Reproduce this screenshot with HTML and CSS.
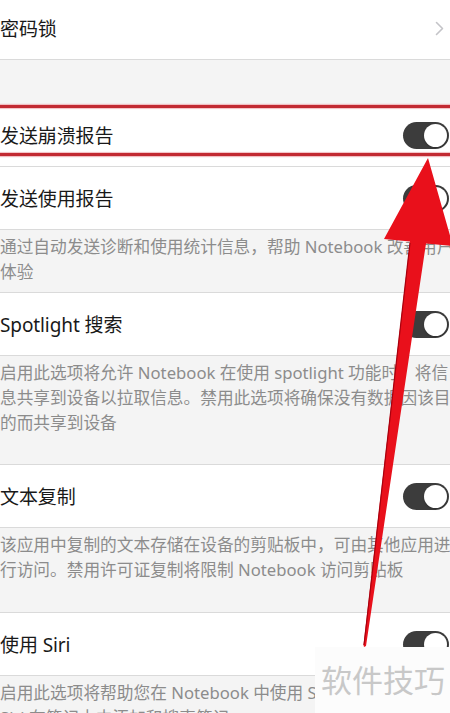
FILE: index.html
```html
<!DOCTYPE html>
<html lang="zh-CN">
<head>
  <meta charset="UTF-8" />
  <meta name="viewport" content="width=device-width, initial-scale=1.0"/>
  <title>设置 - Notebook</title>
  <link rel="stylesheet" href="styles.css">
</head>
<body>

  <!-- Settings list -->
  <div class="screen">
    <div class="cell cell-first">
      <span class="label">密码锁</span>
      <svg class="chevron" width="9" height="15" viewBox="0 0 9 15">
        <path d="M1.5 1.5 L7.5 7.5 L1.5 13.5" fill="none" stroke="#c4c4c8" stroke-width="1.6" stroke-linecap="round" stroke-linejoin="round"/>
      </svg>
    </div>

    <div class="spacer"></div>

    <div class="cell marked">
      <span class="label">发送崩溃报告</span>
      <span class="switch"></span>
      <div class="mark"></div>
    </div>

    <div class="cell">
      <span class="label">发送使用报告</span>
      <span class="switch"></span>
    </div>
    <p class="note">通过自动发送诊断和使用统计信息，帮助 Notebook 改善用户体验</p>

    <div class="cell">
      <span class="label">Spotlight 搜索</span>
      <span class="switch"></span>
    </div>
    <p class="note note-tall">启用此选项将允许 Notebook 在使用 spotlight 功能时，将信息共享到设备以拉取信息。禁用此选项将确保没有数据因该目的而共享到设备</p>

    <div class="cell">
      <span class="label">文本复制</span>
      <span class="switch"></span>
    </div>
    <p class="note note-mid">该应用中复制的文本存储在设备的剪贴板中，可由其他应用进行访问。禁用许可证复制将限制 Notebook 访问剪贴板</p>

    <div class="cell">
      <span class="label">使用 Siri</span>
      <span class="switch"></span>
    </div>
    <p class="note">启用此选项将帮助您在 Notebook 中使用 Siri 快捷方式<br>Siri 在笔记本中添加和搜索笔记</p>
  </div>

  <!-- Annotation arrow -->
  <svg class="arrow" width="450" height="713" viewBox="0 0 450 713">
    <polygon points="428,158 453,246 426,243.4 366,646 364,647 363.5,645 410,241.6 384,239" fill="#e9101b"/>
    <line x1="410" y1="243" x2="364" y2="645" stroke="#a8000e" stroke-width="1.2"/>
  </svg>

  <!-- Watermark -->
  <div class="watermark">软件技巧</div>

</body>
</html>
```

FILE: styles.css
```css
/* Global Styles */
body {
  margin: 0;
  padding: 0;
  width: 450px;
  height: 713px;
  overflow: hidden;
  position: relative;
  background-color: #f4f4f4;
  font-family: 'Noto Sans', 'Noto Sans CJK SC', sans-serif;
}

.screen {
  width: 460px;
}

/* Rows */
.cell {
  position: relative;
  display: flex;
  align-items: center;
  justify-content: space-between;
  height: 62px;
  background-color: #ffffff;
  border-bottom: 1px solid #dadada;
}

.cell-first {
  height: 56px;
  padding-bottom: 3px;
}

.label {
  font-size: 19px;
  color: #191919;
  letter-spacing: -0.1px;
}

.chevron {
  margin-right: 16px;
}

.spacer {
  height: 44px;
}

/* Toggle */
.switch {
  position: relative;
  width: 46px;
  height: 27px;
  margin-right: 11px;
  border-radius: 14px;
  background-color: #3c3c3c;
}

.switch::after {
  content: "";
  position: absolute;
  top: 2px;
  right: 2px;
  width: 23px;
  height: 23px;
  border-radius: 50%;
  background-color: #ffffff;
  box-shadow: 0 1px 2px rgba(0,0,0,0.25);
}

/* Red highlight box */
.mark {
  position: absolute;
  top: 1px;
  left: -20px;
  right: -20px;
  height: 45px;
  border-top: 3px solid #c22a32;
  border-bottom: 3px solid #c22a32;
  box-shadow: 0 0 1px 1px rgba(225,110,120,0.45), inset 0 0 1px 1px rgba(225,110,120,0.45);
}

/* Footnotes */
.note {
  margin: 0;
  padding: 4px 0 8px;
  font-size: 16.7px;
  line-height: 25px;
  color: #8c8c8c;
  border-bottom: 1px solid #dadada;
}

.note-tall {
  height: 96px;
}

.note-mid {
  height: 73px;
  padding-bottom: 7px;
}

/* Overlays */
.arrow {
  position: absolute;
  top: 0;
  left: 0;
  pointer-events: none;
}

.watermark {
  position: absolute;
  left: 315px;
  top: 647px;
  width: 129px;
  height: 66px;
  padding-left: 6px;
  line-height: 64px;
  font-size: 31px;
  color: #c8c8c8;
  background-color: #fcfcfc;
  font-family: 'Noto Sans CJK SC', sans-serif;
}
```
